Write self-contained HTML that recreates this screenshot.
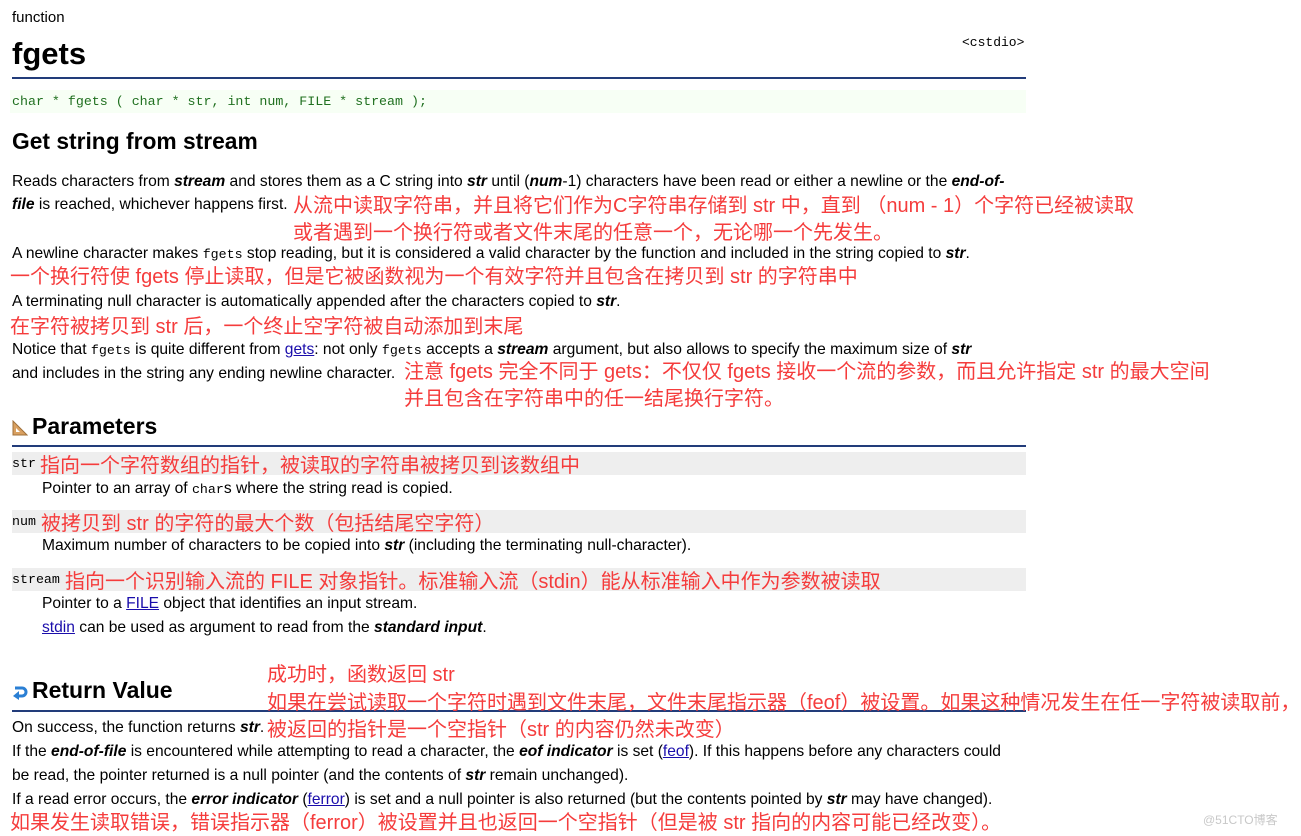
<!DOCTYPE html>
<html><head><meta charset="utf-8"><style>
body{margin:0;width:1301px;height:836px;background:#fff;position:relative;overflow:hidden;font-family:"Liberation Sans",sans-serif;color:#000}
.a{position:absolute;white-space:nowrap}
.t{font-size:15.6px;margin-top:1px}
.r{color:#f53c3c;font-size:20px;margin-top:-1px;font-family:"Liberation Sans","Noto Sans CJK SC",sans-serif}
.m{font-family:"Liberation Mono",monospace;font-size:13.3px}
.rule{position:absolute;left:12px;width:1014px;height:2px;background:#223c7a}
.g{position:absolute;left:12px;width:1014px;height:23px;background:#eeeeee}
a{color:#1a0dab;text-decoration:underline}
</style></head><body>
<div class="a" style="left:12px;top:9px;font-size:15px">function</div>
<div class="a" style="left:12px;top:36px;font-size:31px;font-weight:bold">fgets</div>
<div class="a m" style="left:962px;top:35px;font-size:13px">&lt;cstdio&gt;</div>
<div class="rule" style="top:77px"></div>
<div class="a" style="left:10px;top:90px;width:1016px;height:23px;background:#f7fff5"></div>
<div class="a m" style="left:12px;top:94px;color:#207020">char * fgets ( char * str, int num, FILE * stream );</div>
<div class="a" style="left:12px;top:128px;font-size:22.8px;font-weight:bold">Get string from stream</div>
<div class="a t" style="left:12px;top:172px">Reads characters from <b><i>stream</i></b> and stores them as a C string into <b><i>str</i></b> until (<b><i>num</i></b>-1) characters have been read or either a newline or the <b><i>end-of-</i></b></div>
<div class="a t" style="left:12px;top:195px"><b><i>file</i></b> is reached, whichever happens first.</div>
<div class="a r" style="left:293px;top:190px">从流中读取字符串，并且将它们作为C字符串存储到 str 中，直到 （num - 1）个字符已经被读取</div>
<div class="a r" style="left:293px;top:217px">或者遇到一个换行符或者文件末尾的任意一个，无论哪一个先发生。</div>
<div class="a t" style="left:12px;top:244px">A newline character makes <span class="m">fgets</span> stop reading, but it is considered a valid character by the function and included in the string copied to <b><i>str</i></b>.</div>
<div class="a r" style="left:10px;top:261px">一个换行符使 fgets 停止读取，但是它被函数视为一个有效字符并且包含在拷贝到 str 的字符串中</div>
<div class="a t" style="left:12px;top:292px">A terminating null character is automatically appended after the characters copied to <b><i>str</i></b>.</div>
<div class="a r" style="left:10px;top:311px">在字符被拷贝到 str 后，一个终止空字符被自动添加到末尾</div>
<div class="a t" style="left:12px;top:340px">Notice that <span class="m">fgets</span> is quite different from <a>gets</a>: not only <span class="m">fgets</span> accepts a <b><i>stream</i></b> argument, but also allows to specify the maximum size of <b><i>str</i></b></div>
<div class="a t" style="left:12px;top:364px">and includes in the string any ending newline character.</div>
<div class="a r" style="left:404px;top:356px">注意 fgets 完全不同于 gets：不仅仅 fgets 接收一个流的参数，而且允许指定 str 的最大空间</div>
<div class="a r" style="left:404px;top:383px">并且包含在字符串中的任一结尾换行字符。</div>
<svg class="a" style="left:12px;top:420px" width="16" height="16"><polygon points="1,1 1,15 15,15" fill="#d9a060" stroke="#a0703a"/><polygon points="4,8 4,12 8,12" fill="#fff"/></svg>
<div class="a" style="left:32px;top:413px;font-size:23px;font-weight:bold">Parameters</div>
<div class="rule" style="top:445px;height:1.5px"></div>
<div class="g" style="top:452px"></div>
<div class="a m" style="left:12px;top:456px">str</div>
<div class="a r" style="left:40px;top:450px">指向一个字符数组的指针，被读取的字符串被拷贝到该数组中</div>
<div class="a t" style="left:42px;top:479px">Pointer to an array of <span class="m">char</span>s where the string read is copied.</div>
<div class="g" style="top:510px"></div>
<div class="a m" style="left:12px;top:514px">num</div>
<div class="a r" style="left:41px;top:508px">被拷贝到 str 的字符的最大个数（包括结尾空字符）</div>
<div class="a t" style="left:42px;top:536px">Maximum number of characters to be copied into <b><i>str</i></b> (including the terminating null-character).</div>
<div class="g" style="top:568px"></div>
<div class="a m" style="left:12px;top:572px">stream</div>
<div class="a r" style="left:65px;top:566px">指向一个识别输入流的 FILE 对象指针。标准输入流（stdin）能从标准输入中作为参数被读取</div>
<div class="a t" style="left:42px;top:594px">Pointer to a <a>FILE</a> object that identifies an input stream.</div>
<div class="a t" style="left:42px;top:618px"><a>stdin</a> can be used as argument to read from the <b><i>standard input</i></b>.</div>
<div class="a r" style="left:267px;top:659px">成功时，函数返回 str</div>
<svg class="a" style="left:12px;top:684px" width="16" height="16"><path d="M3 4h7a4 4 0 0 1 0 8H6" fill="none" stroke="#2a7fd4" stroke-width="3"/><polygon points="1,12 7,7 7,16" fill="#2a7fd4"/></svg>
<div class="a" style="left:32px;top:677px;font-size:23px;font-weight:bold">Return Value</div>
<div class="rule" style="top:710px;height:1.5px"></div>
<div class="a r" style="left:267px;top:687px">如果在尝试读取一个字符时遇到文件末尾，文件末尾指示器（feof）被设置。如果这种情况发生在任一字符被读取前，</div>
<div class="a t" style="left:12px;top:718px">On success, the function returns <b><i>str</i></b>.</div>
<div class="a r" style="left:267px;top:714px">被返回的指针是一个空指针（str 的内容仍然未改变）</div>
<div class="a t" style="left:12px;top:742px">If the <b><i>end-of-file</i></b> is encountered while attempting to read a character, the <b><i>eof indicator</i></b> is set (<a>feof</a>). If this happens before any characters could</div>
<div class="a t" style="left:12px;top:766px">be read, the pointer returned is a null pointer (and the contents of <b><i>str</i></b> remain unchanged).</div>
<div class="a t" style="left:12px;top:790px">If a read error occurs, the <b><i>error indicator</i></b> (<a>ferror</a>) is set and a null pointer is also returned (but the contents pointed by <b><i>str</i></b> may have changed).</div>
<div class="a r" style="left:10px;top:807px">如果发生读取错误，错误指示器（ferror）被设置并且也返回一个空指针（但是被 str 指向的内容可能已经改变）。</div>
<div class="a" style="left:1203px;top:811px;font-size:12px;color:#c8c8c8;font-family:'Liberation Sans','Noto Sans CJK SC',sans-serif">@51CTO博客</div>
</body></html>
